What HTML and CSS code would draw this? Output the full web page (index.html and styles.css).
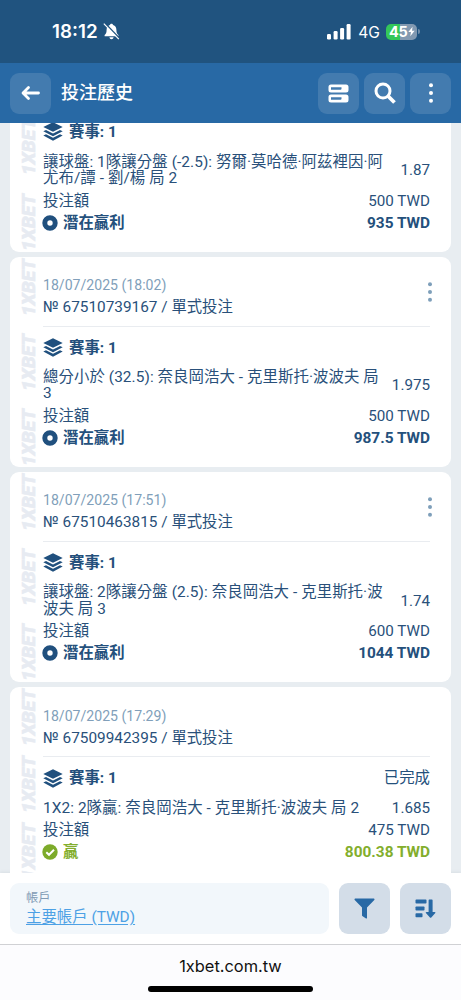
FILE: index.html
```html
<!DOCTYPE html>
<html lang="zh-Hant">
<head>
<meta charset="utf-8">
<meta name="viewport" content="width=device-width, initial-scale=1">
<title>投注歷史</title>
<link rel="stylesheet" href="styles.css">
</head>
<body>
<svg class="defs" width="0" height="0">
  <symbol id="layers" viewBox="0 0 20 19">
    <path d="M10 .2 19.7 5 10 9.8.3 5Z"/>
    <path d="M.3 9.200 3 7.900l7 3.500 7-3.500 2.700 1.300L10 14.200Z"/>
    <path d="M.3 13.600 3 12.300l7 3.500 7-3.500 2.700 1.300L10 18.700Z"/>
  </symbol>
  <symbol id="ring" viewBox="0 0 16 16">
    <circle cx="8" cy="8" r="5.200" fill="none" stroke="currentColor" stroke-width="5"/>
  </symbol>
  <symbol id="check" viewBox="0 0 16 16">
    <circle cx="8" cy="8" r="7.700"/>
    <path d="m4.300 8.200 2.700 2.600 5-5" fill="none" stroke="#fff" stroke-width="2"/>
  </symbol>
  <symbol id="dots" viewBox="0 0 4 20">
    <circle cx="2" cy="2.200" r="2"/><circle cx="2" cy="10" r="2"/><circle cx="2" cy="17.800" r="2"/>
  </symbol>
</svg>

<div class="app">
  <div class="status">
    <div class="status-left">
      <span class="time">18:12</span>
      <svg class="bell" viewBox="0 0 17 17">
        <path d="M8.500.8c-.9 0-1.500.6-1.600 1.300C4.700 2.800 3.600 4.600 3.600 7c0 3-.8 3.900-2 5v1.200h13.800V12c-1.200-1.100-2-2-2-5 0-2.400-1.100-4.200-3.300-4.900C10 1.400 9.400.8 8.500.8ZM6.400 14.200h4.200c-.2 1.300-1 2-2.100 2s-1.900-.7-2.100-2Z" fill="#fff"/>
        <path d="m2 .2 15 15.600" stroke="#20537f" stroke-width="1.500"/>
        <path d="m.8.700 15 15.500" stroke="#fff" stroke-width="1.200"/>
      </svg>
    </div>
    <div class="status-right">
      <svg class="signal" viewBox="0 0 24 16" fill="#fff">
        <rect x="0" y="10" width="4" height="5.500" rx="1.200"/><rect x="6.600" y="7" width="4" height="8.500" rx="1.200"/><rect x="13.100" y="4" width="4" height="11.500" rx="1.200"/><rect x="19.600" y="0" width="4" height="15.500" rx="1.200"/>
      </svg>
      <span class="network">4G</span>
      <div class="battery"><span>45</span>
        <svg viewBox="0 0 8 11"><path d="M5.200 0 .4 6.200h3L2.600 11l5-6.400h-3Z" fill="#fff"/></svg>
      </div>
      <i class="battery-tip"></i>
    </div>
  </div>

  <header class="header">
    <button class="hbtn" aria-label="返回"><svg width="20" height="16" viewBox="0 0 20 16"><path d="M7.500 2.500 2 8l5.500 5.500M2.200 8H17.500" fill="none" stroke="#fff" stroke-width="2.800" stroke-linecap="round" stroke-linejoin="round"/></svg></button>
    <h1 class="title">投注歷史</h1>
    <button class="hbtn" aria-label="檢視"><svg width="21" height="19" viewBox="0 0 21 19"><path fill="#fff" fill-rule="evenodd" d="M3 .5h15a2.500 2.500 0 0 1 2.500 2.500v3A2.500 2.500 0 0 1 18 8.500H3A2.500 2.500 0 0 1 .5 6V3A2.500 2.500 0 0 1 3 .5ZM3 3.200v2.600h9.500a1 1 0 0 0 1-1V3.200ZM3 10.500h15a2.500 2.500 0 0 1 2.500 2.500v3a2.500 2.500 0 0 1-2.500 2.500H3A2.500 2.500 0 0 1 .5 16v-3A2.500 2.500 0 0 1 3 10.500ZM3 13.200v2.600h9.500a1 1 0 0 0 1-1v-1.600Z"/></svg></button>
    <button class="hbtn" aria-label="搜尋"><svg width="22" height="22" viewBox="0 0 22 22" fill="none" stroke="#fff"><circle cx="9" cy="9" r="7" stroke-width="3"/><path d="m14 14 6.500 6.500" stroke-width="3.800"/></svg></button>
    <button class="hbtn" aria-label="更多"><svg width="4" height="20" fill="#fff"><use href="#dots"/></svg></button>
  </header>

  <main class="list">
    <article class="card card-cut">
      <div class="marks">
        <svg viewBox="0 0 16 60"><text transform="translate(15 59) rotate(-90)" textLength="57" lengthAdjust="spacingAndGlyphs">1XBET</text></svg>
        <svg viewBox="0 0 16 60"><text transform="translate(15 59) rotate(-90)" textLength="57" lengthAdjust="spacingAndGlyphs">1XBET</text></svg>
      </div>
      <div class="row event"><svg class="layers"><use href="#layers"/></svg><b>賽事: 1</b></div>
      <div class="row desc"><p>讓球盤: 1隊讓分盤 (-2.5): 努爾·莫哈德·阿茲裡因·阿<br>尤布/譚 - 劉/楊 局 2</p><span class="end">1.87</span></div>
      <div class="row"><span>投注額</span><span class="end">500 TWD</span></div>
      <div class="row strong"><svg class="state"><use href="#ring"/></svg><span>潛在贏利</span><span class="end">935 TWD</span></div>
    </article>

    <article class="card">
      <div class="marks">
        <svg viewBox="0 0 16 60"><text transform="translate(15 59) rotate(-90)" textLength="57" lengthAdjust="spacingAndGlyphs">1XBET</text></svg>
        <svg viewBox="0 0 16 60"><text transform="translate(15 59) rotate(-90)" textLength="57" lengthAdjust="spacingAndGlyphs">1XBET</text></svg>
        <svg viewBox="0 0 16 60"><text transform="translate(15 59) rotate(-90)" textLength="57" lengthAdjust="spacingAndGlyphs">1XBET</text></svg>
      </div>
      <div class="head">
        <div><div class="date">18/07/2025 (18:02)</div><div class="number">№ 67510739167 / 單式投注</div></div>
        <svg class="more"><use href="#dots"/></svg>
      </div>
      <div class="row event"><svg class="layers"><use href="#layers"/></svg><b>賽事: 1</b></div>
      <div class="row desc"><p>總分小於 (32.5): 奈良岡浩大 - 克里斯托·波波夫 局<br>3</p><span class="end">1.975</span></div>
      <div class="row"><span>投注額</span><span class="end">500 TWD</span></div>
      <div class="row strong"><svg class="state"><use href="#ring"/></svg><span>潛在贏利</span><span class="end">987.5 TWD</span></div>
    </article>

    <article class="card">
      <div class="marks">
        <svg viewBox="0 0 16 60"><text transform="translate(15 59) rotate(-90)" textLength="57" lengthAdjust="spacingAndGlyphs">1XBET</text></svg>
        <svg viewBox="0 0 16 60"><text transform="translate(15 59) rotate(-90)" textLength="57" lengthAdjust="spacingAndGlyphs">1XBET</text></svg>
        <svg viewBox="0 0 16 60"><text transform="translate(15 59) rotate(-90)" textLength="57" lengthAdjust="spacingAndGlyphs">1XBET</text></svg>
      </div>
      <div class="head">
        <div><div class="date">18/07/2025 (17:51)</div><div class="number">№ 67510463815 / 單式投注</div></div>
        <svg class="more"><use href="#dots"/></svg>
      </div>
      <div class="row event"><svg class="layers"><use href="#layers"/></svg><b>賽事: 1</b></div>
      <div class="row desc"><p>讓球盤: 2隊讓分盤 (2.5): 奈良岡浩大 - 克里斯托·波<br>波夫 局 3</p><span class="end">1.74</span></div>
      <div class="row"><span>投注額</span><span class="end">600 TWD</span></div>
      <div class="row strong"><svg class="state"><use href="#ring"/></svg><span>潛在贏利</span><span class="end">1044 TWD</span></div>
    </article>

    <article class="card">
      <div class="marks">
        <svg viewBox="0 0 16 60"><text transform="translate(15 59) rotate(-90)" textLength="57" lengthAdjust="spacingAndGlyphs">1XBET</text></svg>
        <svg viewBox="0 0 16 60"><text transform="translate(15 59) rotate(-90)" textLength="57" lengthAdjust="spacingAndGlyphs">1XBET</text></svg>
        <svg viewBox="0 0 16 60"><text transform="translate(15 59) rotate(-90)" textLength="57" lengthAdjust="spacingAndGlyphs">1XBET</text></svg>
      </div>
      <div class="head">
        <div><div class="date">18/07/2025 (17:29)</div><div class="number">№ 67509942395 / 單式投注</div></div>
      </div>
      <div class="row event"><svg class="layers"><use href="#layers"/></svg><b>賽事: 1</b><span class="end">已完成</span></div>
      <div class="row desc"><p>1X2: 2隊贏: 奈良岡浩大 - 克里斯托·波波夫 局 2</p><span class="end">1.685</span></div>
      <div class="row"><span>投注額</span><span class="end">475 TWD</span></div>
      <div class="row strong won"><svg class="state"><use href="#check"/></svg><span>贏</span><span class="end">800.38 TWD</span></div>
    </article>
  </main>

  <div class="toolbar">
    <div class="account"><span class="account-label">帳戶</span><a class="account-link">主要帳戶 (TWD)</a></div>
    <button class="tbtn" aria-label="篩選"><svg width="21" height="21" viewBox="0 0 21 21"><path d="M1 .5h19q1 .5.3 1.500L13 9.500V20q-.3.800-1 .4L8.300 18q-.3-.2-.3-.7V9.500L.7 2Q0 1 1 .5Z"/></svg></button>
    <button class="tbtn" aria-label="排序"><svg width="21" height="19" viewBox="0 0 21 19"><rect x=".5" y=".6" width="11" height="4" rx=".8"/><rect x=".5" y="7.500" width="9" height="4" rx=".8"/><rect x=".5" y="14.300" width="7" height="4" rx=".8"/><path d="M13.600 1.300q0-.7.700-.7h2.600q.7 0 .7.700V13h2q1.400 0 .7 1l-4 4.500q-.7.700-1.400 0l-4-4.500q-.7-1 .7-1h2Z"/></svg></button>
  </div>

  <footer class="browser">
    <span class="url">1xbet.com.tw</span>
    <i class="home"></i>
  </footer>
</div>
</body>
</html>
```
FILE: styles.css
```css
* { box-sizing: border-box; }
body {
  margin: 0;
  font-family: Roboto, "Noto Sans CJK TC", sans-serif;
  font-size: 15.4px;
  color: #29507a;
}
button { border: 0; padding: 0; font: inherit; }
p, h1 { margin: 0; }
svg { flex: none; display: block; }
.defs { position: absolute; }
.app { display: flex; flex-direction: column; width: 461px; height: 1000px; overflow: hidden; background: #e8edf1; }

.status {
  display: flex; justify-content: space-between; align-items: center;
  height: 63px; padding: 0 41px 0 52px;
  background: #20537f; color: #fff;
  font-family: Inter, sans-serif;
}
.status-left, .status-right { display: flex; align-items: center; }
.time { font-size: 18.8px; font-weight: 600; line-height: 24px; }
.bell { width: 17px; height: 17px; margin-left: 5px; }
.signal { width: 24px; height: 16px; }
.network { margin: 1px 6px 0 7px; font-size: 15.6px; }
.battery {
  display: flex; align-items: center; gap: 1px;
  width: 31px; height: 16px; padding-left: 3px; border-radius: 5px;
  background: linear-gradient(90deg, #34c759 46%, #8299b1 46%);
  font-size: 14.5px; font-weight: 700; line-height: 16px; letter-spacing: -.4px;
}
.battery svg { width: 7px; height: 11px; }
.battery-tip { width: 2px; height: 5px; margin-left: 1px; border-radius: 0 2px 2px 0; background: #6f8da9; }

.header {
  display: flex; align-items: center; gap: 5px;
  height: 60px; padding: 0 10px; background: #2869a5;
}
.hbtn {
  display: flex; align-items: center; justify-content: center;
  width: 41px; height: 41px; border-radius: 9px; background: #437baf;
}
.title { flex: 1; padding-left: 5px; color: #fff; font-size: 18px; font-weight: 500; line-height: 24px; }

.list { display: flex; flex-direction: column; gap: 5px; height: 750px; overflow: hidden; padding: 0 10px; }
.card {
  position: relative; flex: none; overflow: hidden;
  padding: 18px 21px 18px 33px;
  border-radius: 9px; background: #fff;
}
.card-cut { height: 128.5px; padding-top: 0; border-radius: 0 0 9px 9px; }
.card-cut .event { height: 19px; margin-top: 0; padding-bottom: 2px; }
.card-cut .desc { padding-top: 11.500px; }
.marks {
  position: absolute; top: 0; bottom: 0; left: 10px;
  display: flex; flex-direction: column; justify-content: space-between;
}
.card-cut .marks { top: -7px; bottom: 0; }
.marks svg { width: 16px; height: 60px; overflow: visible; }
.marks text { fill: #e7ebf2; stroke: #e7ebf2; stroke-width: .5; font: italic 900 19px Roboto, sans-serif; }
.head {
  display: flex; align-items: center; justify-content: space-between;
  height: 52px; padding-bottom: 8px; border-bottom: 1px solid #e9ecf0;
}
.date, .number { line-height: 22px; height: 22px; }
.date { color: #819fba; font-size: 14.1px; }
.number { font-size: 15.350px; }
.more { width: 4px; height: 20px; margin: -8px -2px 0 0; fill: #7e9fba; }
.row { display: flex; align-items: center; height: 22px; line-height: 22px; white-space: nowrap; }
.end { margin-left: auto; }
.row:not(.event):not(.strong) .end { font-size: 15.2px; }
.event { margin-top: 10px; color: #24507c; }
.event b { font-weight: 700; }
.layers { width: 20px; height: 19px; margin-right: 6px; fill: #20507e; }
.desc { height: auto; padding: 10.300px 0 3px; line-height: 16.600px; }
.desc p { letter-spacing: .08px; }
.state { width: 16px; height: 16px; margin: 0 5px 0 -1px; color: #20507e; }
.strong { font-weight: 700; color: #24507c; }
.won { color: #83ae2d; }
.won .state { fill: #7dab2a; }

.toolbar {
  display: flex; gap: 10px; height: 71px; padding: 10px;
  background: #fff;
  box-shadow: 0 -1px 3px rgba(90, 110, 130, .1);
}
.account { display: flex; flex: 1; flex-direction: column; height: 51px; padding: 6px 16px; border-radius: 9px; background: #f2f7fb; }
.account-label { color: #819bb5; font-size: 12.3px; line-height: 18px; }
.account-link { color: #4da1e5; line-height: 21px; text-decoration: underline; text-underline-offset: 2px; }
.tbtn { display: flex; align-items: center; justify-content: center; width: 51px; height: 51px; border-radius: 9px; background: #d3dde8; fill: #2869a5; }

.browser {
  display: flex; flex-direction: column; align-items: center; justify-content: space-between;
  height: 56px; padding: 11px 0 8px; border-top: 1px solid #d0d1d4;
  background: #fcfcfe; color: #111;
  font-family: Inter, sans-serif; font-size: 16.400px;
}
.url { line-height: 20px; }
.home { width: 165px; height: 6px; border-radius: 3px; background: #000; }
```
